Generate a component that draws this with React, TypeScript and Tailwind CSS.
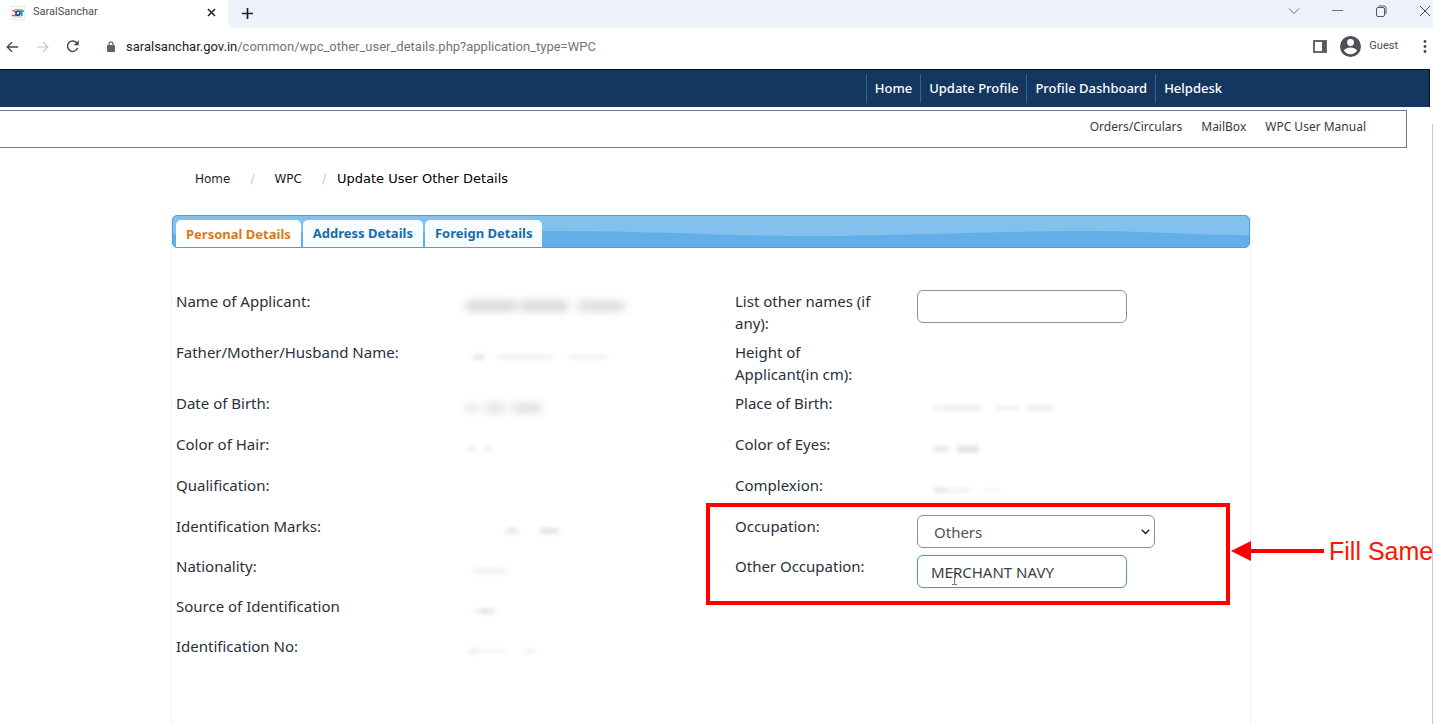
import type { ReactNode } from "react";

const navLinks = ["Home", "Update Profile", "Profile Dashboard", "Helpdesk"];
const subLinks = ["Orders/Circulars", "MailBox", "WPC User Manual"];

// x, width, height and opacity of every smudge in a hidden value
type Smudge = [number, number, number, number];

function Redacted({ smudges, blur = 2 }: { smudges: Smudge[]; blur?: number }) {
  return (
    <svg width="200" height="32" viewBox="0 0 200 32" aria-hidden="true" className="overflow-visible">
      <g style={{ filter: `blur(${blur}px)` }}>
        {smudges.map(([x, w, h, o], i) => (
          <rect key={i} x={x} y={16 - h / 2} width={w} height={h} rx={h / 2} fill="#55505a" opacity={o} />
        ))}
      </g>
    </svg>
  );
}

const rowHeights = { tall: "min-h-[51px]", medium: "min-h-[41px]", short: "min-h-[40px]" };

function Row({ size = "short", children }: { size?: keyof typeof rowHeights; children: ReactNode }) {
  return (
    <div className={`grid grid-cols-[289px_270px_182px_1fr] items-start ${rowHeights[size]}`}>
      {children}
    </div>
  );
}

function Label({ id, children }: { id?: string; children: ReactNode }) {
  return id ? (
    <label htmlFor={id} className="pr-[36px]">{children}</label>
  ) : (
    <span className="pr-[36px]">{children}</span>
  );
}

function BrowserChrome() {
  return (
    <header className="font-['Roboto',sans-serif] text-[#4a4e53]">
      {/* tab strip */}
      <div className="flex h-[28px] bg-[#eef2fa]">
        <div className="flex w-[228px] items-center bg-white pr-[12px] pb-[3px] pl-[11px] text-[11px]">
          <svg width="14" height="14" viewBox="0 0 14 14" fill="none" className="mr-[8px]">
            <rect x=".5" y=".5" width="13" height="13" stroke="#e8eaed" />
            <path d="M3 3.500h8" stroke="#9db3a8" strokeWidth="1" />
            <path d="M1.500 5h1.500a2 2 0 010 4.500h-2" stroke="#e0523c" strokeWidth="1.500" />
            <circle cx="7" cy="7.200" r="2" stroke="#24509b" strokeWidth="1.700" />
            <path d="M8.500 5h4.500M10.800 5v5" stroke="#18a08a" strokeWidth="1.500" />
            <path d="M3 11h8" stroke="#a9b8cc" strokeWidth="1" />
          </svg>
          <span className="flex-1">SaralSanchar</span>
          <button aria-label="Close tab">
            <svg width="9" height="9" viewBox="0 0 9 9" stroke="#202124" strokeWidth="1.500">
              <path d="M1 1l7 7M8 1l-7 7" />
            </svg>
          </button>
        </div>
        <div className="bg-white">
          <div className="flex h-full items-center rounded-bl-lg bg-[#eef2fa] px-[14px] pb-[2px]">
            <button aria-label="New tab">
              <svg width="11" height="11" viewBox="0 0 11 11" stroke="#202124" strokeWidth="1.700">
                <path d="M5.500 0v11M0 5.500h11" />
              </svg>
            </button>
          </div>
        </div>
        <div className="ml-auto flex items-start gap-[32px] pt-[5px] pr-[2px]">
          <button aria-label="Search tabs">
            <svg width="12" height="12" viewBox="0 0 12 12" fill="none" stroke="#6b6f76">
              <path d="M1 3.500l5 5 5-5" />
            </svg>
          </button>
          <button aria-label="Minimise">
            <svg width="11" height="12" viewBox="0 0 11 12" stroke="#6b6f76">
              <path d="M0 5.500h11" />
            </svg>
          </button>
          <button aria-label="Restore">
            <svg width="12" height="12" viewBox="0 0 12 12" fill="none" stroke="#55585e">
              <rect x="1.500" y="2.500" width="8" height="9" rx="1.500" />
              <path d="M3.500 1h5.500a2 2 0 012 2v6" />
            </svg>
          </button>
          <button aria-label="Close">
            <svg width="12" height="12" viewBox="0 0 12 12" stroke="#44474c">
              <path d="M1 1l10 10M11 1L1 11" />
            </svg>
          </button>
        </div>
      </div>

      {/* address bar */}
      <div className="flex h-[41px] items-center bg-white pr-[6px] pb-[4px] pl-[6px]">
        <button aria-label="Back" className="mr-[17px]">
          <svg width="13" height="12" viewBox="0 0 14 12" fill="none" stroke="#45484d" strokeWidth="1.400">
            <path d="M13 6H1M6.500 .8L1.200 6l5.300 5.200" />
          </svg>
        </button>
        <button aria-label="Forward" className="mr-[17px]">
          <svg width="13" height="12" viewBox="0 0 14 12" fill="none" stroke="#c4c6c9" strokeWidth="1.300">
            <path d="M1 6h12M7.500 .8L12.800 6l-5.300 5.200" />
          </svg>
        </button>
        <button aria-label="Reload" className="mr-[28px]">
          <svg width="13" height="13" viewBox="0 0 13 13" fill="none" stroke="#45484d" strokeWidth="1.500">
            <path d="M11 3.200A5.200 5.200 0 1011.600 8" />
            <path d="M12.700 .3v5H7.700z" fill="#45484d" stroke="none" />
          </svg>
        </button>
        <svg width="8" height="11" viewBox="0 0 8 11" fill="none" className="mr-[11px]">
          <rect y="4" width="8" height="7" rx="1" fill="#5f6368" />
          <path d="M2 4.500V2.800a2 2 0 014 0v1.700" stroke="#5f6368" strokeWidth="1.200" />
        </svg>
        <p className="flex-1 text-[13px] text-[#6f757d]">
          <span className="text-[#202124]">saralsanchar.gov.in</span>
          /common/wpc_other_user_details.php?application_type=WPC
        </p>
        <button aria-label="Side panel" className="mr-[13px]">
          <svg width="14" height="13" viewBox="0 0 14 13" fill="none">
            <rect x="1" y="1" width="12" height="11" stroke="#55585d" strokeWidth="1.800" />
            <path d="M9 1h4v11H9z" fill="#55585d" />
          </svg>
        </button>
        <button className="flex items-center gap-[8px] text-[11px]">
          <svg width="21" height="21" viewBox="0 0 21 21">
            <circle cx="10.500" cy="10.500" r="10.500" fill="#4d5156" />
            <circle cx="10.500" cy="6.500" r="3.400" fill="#fff" />
            <path d="M3.800 14.500c1.500-2 4-3 6.700-3s5.200 1 6.700 3c-1.500 2.400-4 3.700-6.700 3.700s-5.200-1.300-6.700-3.700z" fill="#fff" />
          </svg>
          Guest
        </button>
        <button aria-label="Menu" className="ml-[25px]">
          <svg width="4" height="13" viewBox="0 0 4 13" fill="#45484d">
            <circle cx="2" cy="1.500" r="1.400" />
            <circle cx="2" cy="6.500" r="1.400" />
            <circle cx="2" cy="11.500" r="1.400" />
          </svg>
        </button>
      </div>
    </header>
  );
}

function Tabs() {
  return (
    <div className="relative flex h-[33px] items-start gap-[2px] overflow-hidden rounded-[5px] border border-[#4f9fd8] bg-[#82c0ee] px-[3px] pt-[4px] text-[13px] font-bold text-[#1c6ba8]">
      <svg className="absolute inset-0 h-full w-full" viewBox="0 0 1076 31" preserveAspectRatio="none">
        <path d="M0 18C120 15 240 15 370 15S560 21 660 20 840 15 910 15 1010 19 1076 19V31H0z" fill="#62aee8" />
      </svg>
      <button className="relative h-[28px] rounded-t-[5px] bg-white px-[10px] pt-px text-[#dd7718]">Personal Details</button>
      <button className="relative h-[27px] rounded-t-[5px] bg-[#f6fcff] px-[10px] pt-px">Address Details</button>
      <button className="relative h-[27px] rounded-t-[5px] bg-[#f6fcff] px-[10px] pt-px">Foreign Details</button>
    </div>
  );
}

function Annotation() {
  return (
    <>
      <div className="pointer-events-none absolute -top-[12px] left-[530px] h-[102px] w-[524px] border-4 border-[#fe0000]" />
      <div className="pointer-events-none absolute top-[20px] left-[1055px] flex items-center gap-[5px] text-[25px] leading-[32px] whitespace-nowrap text-[#fe1400]">
        <svg width="93" height="20" viewBox="0 0 93 20" fill="#fe0000">
          <path d="M0 10L20 0v8h73v4H20v8z" />
        </svg>
        <span className="font-['Liberation_Sans',sans-serif]">Fill Same</span>
      </div>
    </>
  );
}

function DetailsForm() {
  return (
    <form className="px-[4px] pt-[42px] pb-[49px] text-[15px] leading-[22px] text-[#29303b]">
      <Row size="tall">
        <Label>Name of Applicant:</Label>
        <Redacted blur={4} smudges={[[0, 52, 10, 0.25], [54, 50, 10, 0.25], [112, 48, 10, 0.22]]} />
        <Label id="other-names">List other names (if any):</Label>
        <input id="other-names" className="h-[33px] w-[210px] rounded-md border border-[#8d9094] bg-white px-[13px]" />
      </Row>
      <Row size="tall">
        <Label>Father/Mother/Husband Name:</Label>
        <Redacted smudges={[[8, 12, 5, 0.17], [32, 56, 4, 0.1], [104, 38, 4, 0.09]]} />
        <Label>Height of Applicant(in cm):</Label>
      </Row>
      <Row size="medium">
        <Label>Date of Birth:</Label>
        <Redacted blur={4} smudges={[[0, 14, 9, 0.16], [20, 20, 9, 0.18], [46, 32, 9, 0.2]]} />
        <Label>Place of Birth:</Label>
        <Redacted smudges={[[16, 8, 4, 0.12], [26, 38, 5, 0.13], [78, 24, 4, 0.1], [110, 26, 5, 0.13]]} />
      </Row>
      <Row size="medium">
        <Label>Color of Hair:</Label>
        <Redacted smudges={[[2, 8, 4, 0.12], [18, 9, 4, 0.1]]} />
        <Label>Color of Eyes:</Label>
        <Redacted smudges={[[16, 16, 6, 0.14], [40, 22, 7, 0.17]]} />
      </Row>
      <Row size="medium">
        <Label>Qualification:</Label>
        <span />
        <Label>Complexion:</Label>
        <Redacted smudges={[[16, 14, 5, 0.16], [30, 24, 4, 0.09], [66, 16, 3, 0.07]]} />
      </Row>
      <div className="relative">
        <Row>
          <Label>Identification Marks:</Label>
          <Redacted smudges={[[41, 12, 6, 0.14], [74, 20, 6, 0.16]]} />
          <Label id="occupation">Occupation:</Label>
          <div className="relative w-[238px]">
            <select id="occupation" className="h-[33px] w-full appearance-none rounded-md border border-[#8d9094] bg-white px-[16px] text-[#4d5257]">
              <option>Others</option>
            </select>
            <svg width="9" height="6" viewBox="0 0 9 6" fill="none" stroke="#222" strokeWidth="1.500" className="pointer-events-none absolute top-[14px] right-[5px]">
              <path d="M.8 .8l3.700 3.700L8.200 .8" />
            </svg>
          </div>
        </Row>
        <Row>
          <Label>Nationality:</Label>
          <Redacted smudges={[[8, 34, 5, 0.09]]} />
          <Label id="other-occupation">Other Occupation:</Label>
          <div className="relative w-[210px]">
            <input
              id="other-occupation"
              defaultValue="MERCHANT NAVY"
              className="h-[33px] w-full rounded-md border border-[#6f8fa6] bg-white px-[13px] text-[#3a4148] shadow-[0_0_3px_#cdeef8]"
            />
            {/* text cursor */}
            <svg width="7" height="13" viewBox="0 0 7 13" fill="none" stroke="#777" className="pointer-events-none absolute top-[17px] left-[34px]">
              <path d="M1 .5h5M3.500 .5v12M1 12.500h5" />
            </svg>
          </div>
        </Row>
        <Annotation />
      </div>
      <Row>
        <Label>Source of Identification</Label>
        <Redacted smudges={[[9, 12, 4, 0.1], [17, 13, 6, 0.14]]} />
      </Row>
      <Row>
        <Label>Identification No:</Label>
        <Redacted smudges={[[4, 7, 5, 0.12], [10, 30, 3, 0.08], [59, 12, 4, 0.08]]} />
      </Row>
    </form>
  );
}

export default function App() {
  return (
    <div className="flex min-h-screen flex-col overflow-x-hidden bg-white font-['Noto_Sans',sans-serif]">
      <BrowserChrome />

      <nav className="mr-[3px] flex h-[38px] items-center justify-end border-t border-r border-t-[#050d18] border-r-[#050d18] bg-[#13375f] pr-[199px] text-[13px] font-medium text-white">
        {navLinks.map((name) => (
          <a key={name} href="#" className="border-l border-[#3d6288] px-[8px] leading-[29px]">{name}</a>
        ))}
      </nav>

      <div className="flex flex-1">
        <div className="flex-1">
          <div className="mt-[3px] mr-[25px] flex h-[38px] items-center justify-end gap-[19px] border border-l-0 border-[#77797c] pr-[40px] pb-[4px] text-[12px] text-[#333a42]">
            {subLinks.map((name) => (
              <a key={name} href="#">{name}</a>
            ))}
          </div>

          <main className="mr-[181px] ml-[171px] pt-[19px]">
            <div className="flex h-[24px] items-center pl-[24px] font-['DejaVu_Sans',sans-serif] text-[12px] text-[#1f2226]">
              <a href="#">Home</a>
              <span className="px-[20px] text-[#c5c8cb]">/</span>
              <a href="#">WPC</a>
              <span className="pr-[11px] pl-[20px] text-[#c5c8cb]">/</span>
              <span className="text-[13px] text-black">Update User Other Details</span>
            </div>
            <div className="mt-[24px] border-x border-[#f0f1f2]">
              <Tabs />
              <DetailsForm />
            </div>
          </main>
        </div>
        {/* scroll track edge */}
        <div className="mt-[17px] w-px bg-[#c9c9c9]" />
      </div>
    </div>
  );
}
